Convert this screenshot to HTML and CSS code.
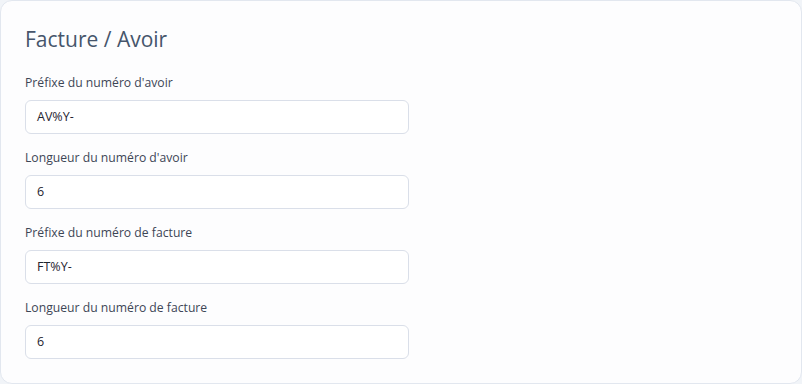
FILE: index.html
```html
<!DOCTYPE html>
<html lang="fr">
<head>
<meta charset="utf-8">
<link rel="stylesheet" href="styles.css">
</head>
<body>
<section class="card">
  <h2 class="title">Facture / Avoir</h2>
  <div class="fields">
    <div class="field">
      <label class="label">Préfixe du numéro d'avoir</label>
      <div class="input">AV%Y-</div>
    </div>
    <div class="field">
      <label class="label">Longueur du numéro d'avoir</label>
      <div class="input">6</div>
    </div>
    <div class="field">
      <label class="label">Préfixe du numéro de facture</label>
      <div class="input">FT%Y-</div>
    </div>
    <div class="field">
      <label class="label">Longueur du numéro de facture</label>
      <div class="input">6</div>
    </div>
  </div>
</section>
</body>
</html>
```

FILE: styles.css
```css
* { box-sizing: border-box; }
html, body { margin: 0; padding: 0; }
body {
  background: #f1f4f8;
  font-family: "Open Sans", "Noto Sans", sans-serif;
  width: 802px;
  height: 384px;
  overflow: hidden;
}
.card {
  width: 802px;
  height: 384px;
  background: #fdfdfe;
  border: 1px solid #e2e7ef;
  border-radius: 12px;
  padding: 24px 24px;
}
.title {
  margin: 0;
  font-size: 21px;
  line-height: 28px;
  font-weight: 400;
  color: #46556b;
}
.fields {
  margin-top: 20px;
  display: flex;
  flex-direction: column;
  gap: 14px;
}
.field {
  display: flex;
  flex-direction: column;
  gap: 7px;
}
.label {
  font-size: 12.2px;
  line-height: 20px;
  color: #3d4656;
}
.input {
  width: 384px;
  height: 34px;
  border: 1px solid #dadfe9;
  border-radius: 6px;
  background: #fff;
  padding: 0 11px;
  font-size: 12.5px;
  line-height: 32px;
  color: #1f2430;
}
```
